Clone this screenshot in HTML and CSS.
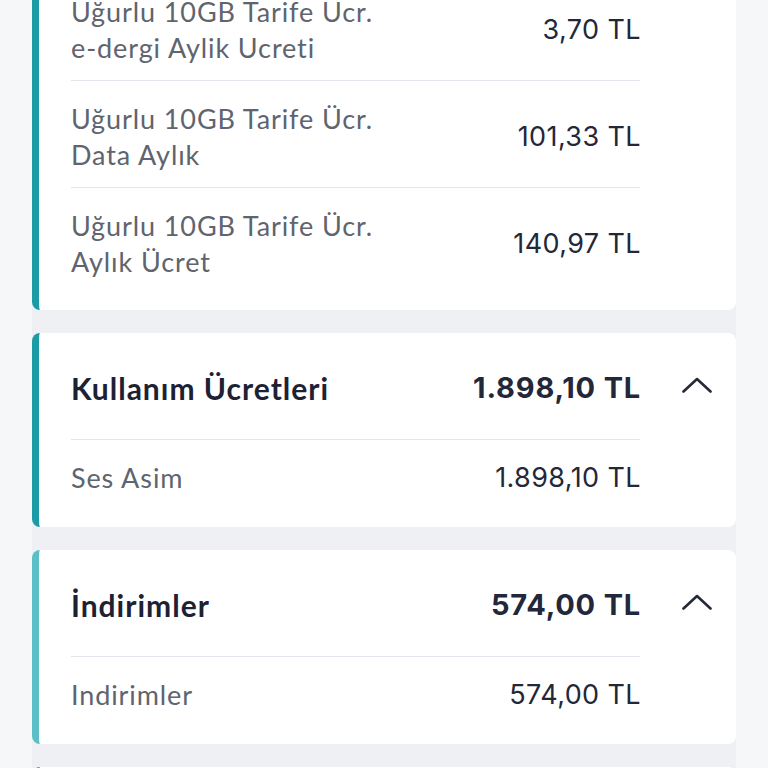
FILE: index.html
```html
<!DOCTYPE html>
<html lang="tr">
<head>
<meta charset="utf-8">
<link rel="stylesheet" href="styles.css">
</head>
<body>
<div class="page">
  <div class="list">
    <section class="card card-first">
      <div class="row">
        <div class="label">Uğurlu 10GB Tarife Ucr.<br>e-dergi Aylik Ucreti</div>
        <div class="amount">3,70 TL</div>
      </div>
      <div class="row">
        <div class="label">Uğurlu 10GB Tarife Ücr.<br>Data Aylık</div>
        <div class="amount">101,33 TL</div>
      </div>
      <div class="row">
        <div class="label">Uğurlu 10GB Tarife Ücr.<br>Aylık Ücret</div>
        <div class="amount">140,97 TL</div>
      </div>
    </section>

    <section class="card">
      <div class="head">
        <div class="title">Kullanım Ücretleri</div>
        <div class="total">1.898,10 TL</div>
        <svg class="chev" viewBox="0 0 30 16" width="30" height="16"><path d="M1.5 14.5 L15 2 L28.5 14.5" fill="none" stroke="#262a38" stroke-width="2.6" stroke-linecap="round" stroke-linejoin="round"/></svg>
      </div>
      <div class="row single">
        <div class="label">Ses Asim</div>
        <div class="amount">1.898,10 TL</div>
      </div>
    </section>

    <section class="card light">
      <div class="head">
        <div class="title">İndirimler</div>
        <div class="total">574,00 TL</div>
        <svg class="chev" viewBox="0 0 30 16" width="30" height="16"><path d="M1.5 14.5 L15 2 L28.5 14.5" fill="none" stroke="#262a38" stroke-width="2.6" stroke-linecap="round" stroke-linejoin="round"/></svg>
      </div>
      <div class="row single">
        <div class="label">Indirimler</div>
        <div class="amount">574,00 TL</div>
      </div>
    </section>

    <section class="card card-empty"></section>
  </div>
</div>
</body>
</html>
```

FILE: styles.css
```css
html, body {
  margin: 0;
  padding: 0;
  background: #f6f7f9;
  overflow: hidden;
}

.page {
  width: 768px;
  height: 768px;
  overflow: hidden;
}

.list {
  margin: 0 32px;
  background: #eef0f3;
  display: flex;
  flex-direction: column;
  gap: 23px;
}

.card {
  background: #ffffff;
  border-left: 7px solid #1a9ba6;
  border-radius: 8px;
  padding: 0 96px 16px 32px;
}

.card.light {
  border-left-color: #5bbfc8;
}

.card-first {
  margin-top: -26px;
  border-top-left-radius: 0;
  border-top-right-radius: 0;
}

.card-empty {
  height: 120px;
}

.head {
  position: relative;
  display: flex;
  justify-content: space-between;
  align-items: center;
  padding: 37px 0 33px;
  border-bottom: 1px solid #e4e5ec;
}

.title {
  font-family: "Lato", sans-serif;
  font-weight: 700;
  font-size: 30px;
  line-height: 36px;
  letter-spacing: 1px;
  color: #1d2134;
}

.total {
  font-family: "Inter", sans-serif;
  font-weight: 700;
  font-size: 29px;
  line-height: 36px;
  color: #23273a;
  letter-spacing: 0.8px;
  margin-right: -1px;
}

.chev {
  position: absolute;
  right: -72px;
  top: 44px;
}

.row {
  display: flex;
  justify-content: space-between;
  align-items: center;
  padding: 20px 0 14px;
  border-bottom: 1px solid #e4e5ec;
}

.row.single {
  padding: 20px 0 15px;
}

.row:last-child {
  border-bottom: none;
}

.label {
  font-family: "Lato", sans-serif;
  font-weight: 400;
  font-size: 27px;
  line-height: 36px;
  letter-spacing: 0.9px;
  color: #60646e;
}

.amount {
  font-family: "Inter", sans-serif;
  font-weight: 400;
  font-size: 27px;
  line-height: 36px;
  color: #23273a;
  letter-spacing: 0.4px;
  margin-right: -1px;
}
```
